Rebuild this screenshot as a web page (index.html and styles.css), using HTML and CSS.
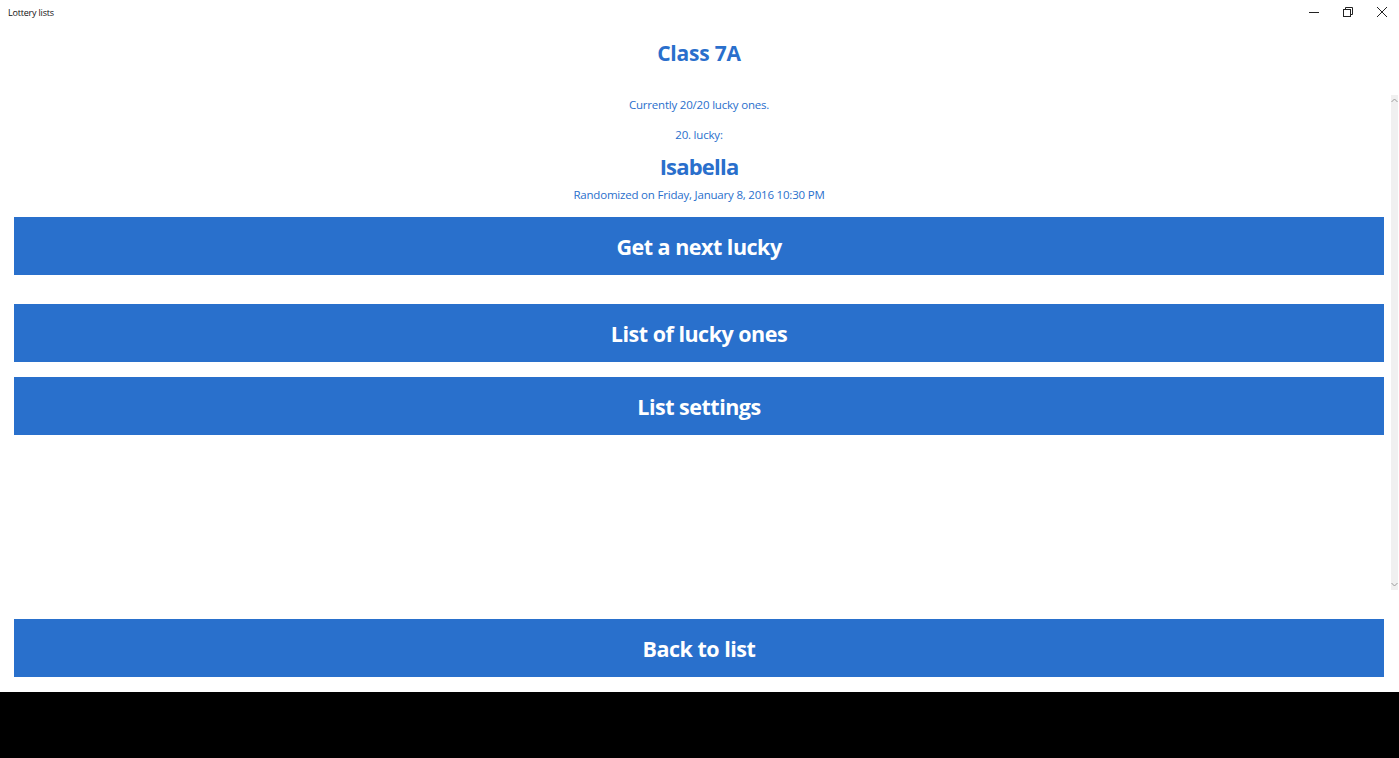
FILE: index.html
```html
<!DOCTYPE html>
<html lang="en">
<head>
    <meta charset="UTF-8">
    <meta name="viewport" content="width=device-width, initial-scale=1.0">
    <title>Lottery lists</title>
    <link rel="stylesheet" href="styles.css">
</head>
<body>
    <div class="title-bar">
        <span class="app-name">Lottery lists</span>
        <div class="window-controls">
            <span class="win-btn">
                <svg width="10" height="10" viewBox="0 0 10 10"><path d="M0 5.5h10" stroke="#222" stroke-width="1"/></svg>
            </span>
            <span class="win-btn">
                <svg width="10" height="10" viewBox="0 0 10 10" fill="none" stroke="#222" stroke-width="1"><rect x="0.5" y="2.5" width="7" height="7"/><path d="M2.5 2.5V0.5h7v7h-2"/></svg>
            </span>
            <span class="win-btn">
                <svg width="10" height="10" viewBox="0 0 10 10"><path d="M0 0L10 10M10 0L0 10" stroke="#222" stroke-width="1"/></svg>
            </span>
        </div>
    </div>

    <div class="page">
        <div class="page-scroll">
            <h1 class="list-name">Class 7A</h1>
            <div class="status">Currently 20/20 lucky ones.</div>
            <div class="lucky-no">20. lucky:</div>
            <div class="lucky-name">Isabella</div>
            <div class="drawn-at">Randomized on Friday, January 8, 2016 10:30 PM</div>

            <button class="big-btn first">Get a next lucky</button>
            <button class="big-btn second">List of lucky ones</button>
            <button class="big-btn">List settings</button>
        </div>

        <!-- scrollbar of the page area -->
        <div class="scrollbar">
            <svg width="7" height="5" viewBox="0 0 7 5"><path d="M0.5 4L3.5 1l3 3" fill="none" stroke="#9a9a9a" stroke-width="1"/></svg>
            <svg width="7" height="5" viewBox="0 0 7 5"><path d="M0.5 1l3 3 3-3" fill="none" stroke="#9a9a9a" stroke-width="1"/></svg>
        </div>

        <button class="big-btn back">Back to list</button>
    </div>

    <div class="bottom-bar"></div>
</body>
</html>
```

FILE: styles.css
```css
body { margin: 0; padding: 0; height: 758px; display: flex; flex-direction: column; font-family: "Open Sans", "Noto Sans", sans-serif; background-color: #ffffff; overflow: hidden; }
.title-bar { height: 24px; display: flex; align-items: center; justify-content: space-between; padding-left: 8px; }
.app-name { font-size: 9px; letter-spacing: -0.2px; color: #111; }
.window-controls { display: flex; align-self: stretch; }
.win-btn { width: 34px; display: flex; align-items: center; justify-content: center; }
.page { flex-grow: 1; display: flex; flex-direction: column; position: relative; padding: 0 15px 15px 14px; }
.page-scroll { flex-grow: 1; display: flex; flex-direction: column; align-items: stretch; text-align: center; color: #2a6fcc; }
.list-name { margin: 14px 0 0; font-size: 21px; line-height: 30px; font-weight: 700; letter-spacing: -0.2px; }
.status, .lucky-no, .drawn-at { font-size: 11.5px; line-height: 20px; letter-spacing: -0.2px; }
.status { margin-top: 27px; }
.lucky-no { margin-top: 10px; }
.lucky-name { margin-top: 6px; font-size: 22px; line-height: 30px; font-weight: 700; letter-spacing: -0.8px; }
.drawn-at { margin-top: 4px; }
.big-btn { display: block; width: 100%; height: 58px; padding: 0; border: none; background-color: #2970cc; color: white; font-family: inherit; font-size: 21.5px; font-weight: 700; letter-spacing: -0.5px; cursor: pointer; }
.big-btn.first { margin-top: 12px; }
.big-btn.second { margin-top: 29px; margin-bottom: 15px; }
.scrollbar { position: absolute; top: 71px; right: 1px; width: 7px; height: 495px; background: #f0f0f0; display: flex; flex-direction: column; justify-content: space-between; align-items: center; padding: 3px 0; box-sizing: border-box; }
.bottom-bar { height: 66px; background: #000; }
```
